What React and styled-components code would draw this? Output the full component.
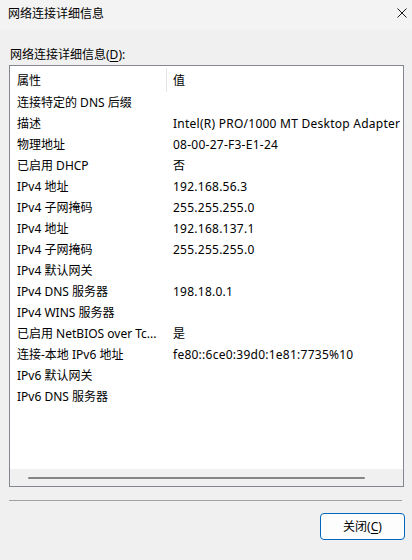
import styled, { createGlobalStyle } from "styled-components";

const GlobalStyle = createGlobalStyle`
    html, body {
        margin: 0;
        padding: 0;
        background: #f0f0f0;
    }
    * {
        box-sizing: border-box;
    }
`;

const rows = [
    ["连接特定的 DNS 后缀", ""],
    ["描述", "Intel(R) PRO/1000 MT Desktop Adapter"],
    ["物理地址", "08-00-27-F3-E1-24"],
    ["已启用 DHCP", "否"],
    ["IPv4 地址", "192.168.56.3"],
    ["IPv4 子网掩码", "255.255.255.0"],
    ["IPv4 地址", "192.168.137.1"],
    ["IPv4 子网掩码", "255.255.255.0"],
    ["IPv4 默认网关", ""],
    ["IPv4 DNS 服务器", "198.18.0.1"],
    ["IPv4 WINS 服务器", ""],
    ["已启用 NetBIOS over Tc...", "是"],
    ["连接-本地 IPv6 地址", "fe80::6ce0:39d0:1e81:7735%10"],
    ["IPv6 默认网关", ""],
    ["IPv6 DNS 服务器", ""],
];

const Window = styled.div`
    width: 412px;
    height: 560px;
    display: flex;
    flex-direction: column;
    background: #f0f0f0;
    font-family: "Noto Sans", "Noto Sans CJK SC", sans-serif;
    font-size: 12px;
    color: #000;
    overflow: hidden;
`;

const TitleBar = styled.div`
    height: 30px;
    flex-shrink: 0;
    display: flex;
    align-items: flex-start;
    justify-content: space-between;
    padding: 6px 5px 0 8px;
    background: #f3f3f3;
    line-height: 16px;
`;

const CloseIcon = styled.svg`
    width: 10px;
    height: 10px;
    margin-top: 2px;
`;

const Label = styled.div`
    margin: 17px 0 0 10px;
    line-height: 16px;
    height: 16px;
`;

const ListBox = styled.div`
    margin: 2px 8px 0 9px;
    height: 422px;
    flex-shrink: 0;
    border: 1px solid #828790;
    background: #fff;
    display: flex;
    flex-direction: column;
`;

const Row = styled.div`
    display: flex;
    height: ${(p) => (p.$header ? "25px" : "21px")};
    align-items: center;
    line-height: 16px;
    white-space: nowrap;
`;

const NameCell = styled.div`
    width: 156px;
    padding: ${(p) => (p.$header ? "4px" : "2px")} 0 0 7px;
    overflow: hidden;
`;

const Divider = styled.div`
    width: 1px;
    align-self: flex-start;
    margin-top: 2px;
    height: 24px;
    background: #e5e5e5;
`;

const ValueCell = styled.div`
    padding: ${(p) => (p.$header ? "4px 0 0 6px" : "2px 0 0 7px")};
    letter-spacing: 0.25px;
`;

const Filler = styled.div`
    flex: 1;
`;

const ScrollBar = styled.div`
    height: 17px;
    background: #f0f0f0;
    display: flex;
    align-items: center;
    padding-left: 18px;
`;

const Thumb = styled.div`
    width: 337px;
    height: 2px;
    border-radius: 1px;
    background: #858585;
`;

const Separator = styled.div`
    margin: 13px 10px 0 9px;
    height: 1px;
    flex-shrink: 0;
    background: #a0a0a0;
`;

const Footer = styled.div`
    display: flex;
    justify-content: flex-end;
    padding: 12px 7px 0 0;
`;

const Button = styled.button`
    width: 85px;
    height: 27px;
    border: 1px solid #0067c0;
    border-radius: 4px;
    background: #fdfdfd;
    font: inherit;
    color: #000;
    padding: 1px 0 0;
    line-height: 16px;
`;

const Key = styled.span`
    text-decoration: underline;
    text-underline-offset: 2px;
`;

export default function App() {
    return (
        <>
            <GlobalStyle />
            <Window>
                <TitleBar>
                    <span>网络连接详细信息</span>
                    <CloseIcon viewBox="0 0 10 10">
                        <path
                            d="M0.5 0.5 L9.5 9.5 M9.5 0.5 L0.5 9.5"
                            stroke="#1a1a1a"
                            strokeWidth="1"
                            fill="none"
                        />
                    </CloseIcon>
                </TitleBar>
                <Label>
                    网络连接详细信息(<Key>D</Key>):
                </Label>
                <ListBox>
                    <Row $header>
                        <NameCell $header>属性</NameCell>
                        <Divider />
                        <ValueCell $header>值</ValueCell>
                    </Row>
                    {rows.map(([name, value], i) => (
                        <Row key={`${name}-${i}`}>
                            <NameCell>{name}</NameCell>
                            <ValueCell>{value}</ValueCell>
                        </Row>
                    ))}
                    <Filler />
                    <ScrollBar>
                        <Thumb />
                    </ScrollBar>
                </ListBox>
                <Separator />
                <Footer>
                    <Button>
                        关闭(<Key>C</Key>)
                    </Button>
                </Footer>
            </Window>
        </>
    );
}
